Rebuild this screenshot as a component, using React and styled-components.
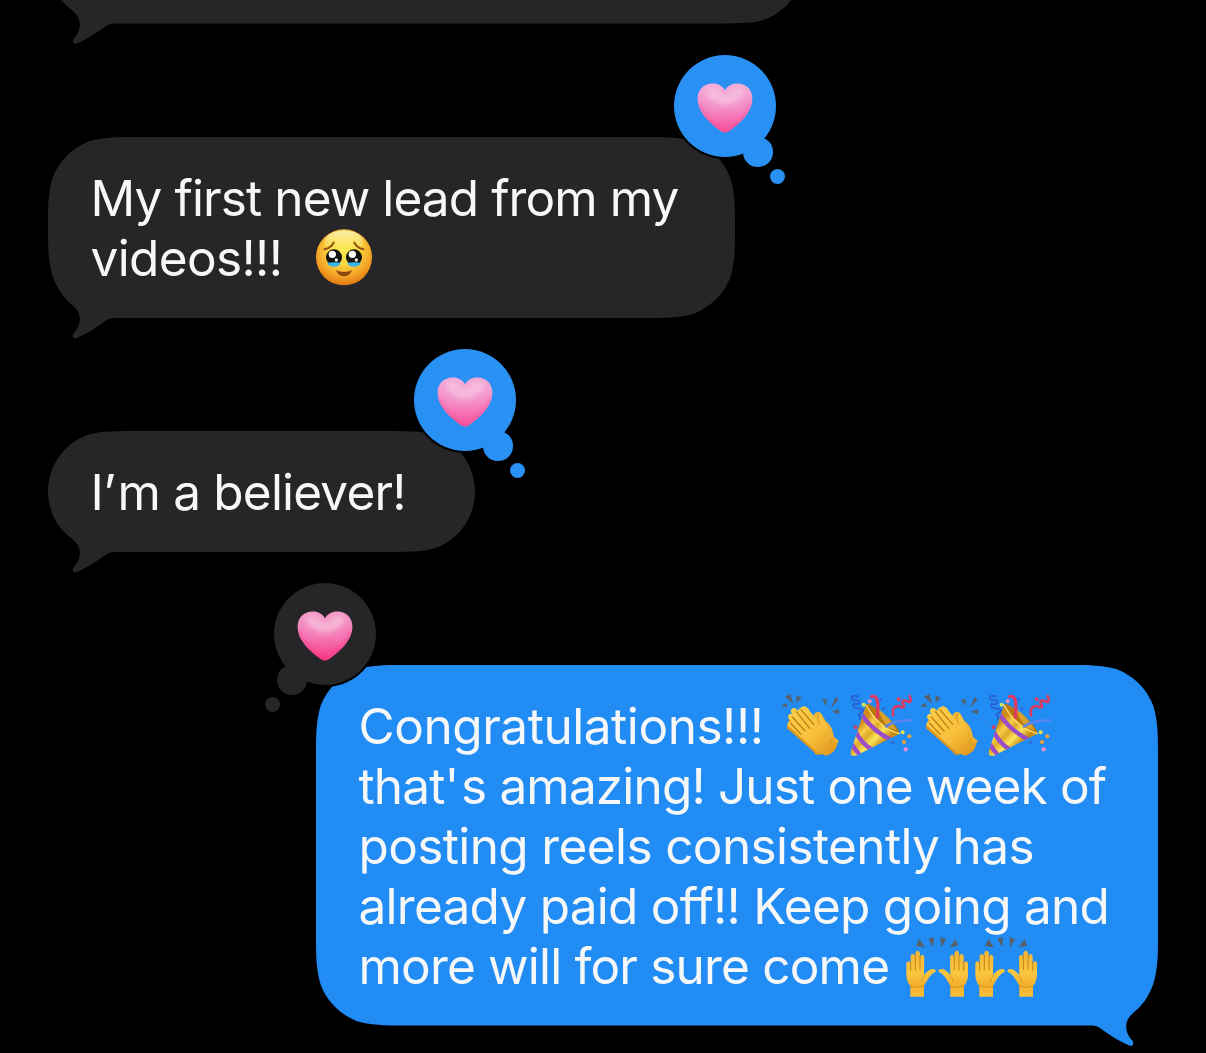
import React from 'react';
import styled, { createGlobalStyle, css } from 'styled-components';

const colors = {
    black: '#000000',
    received: '#262628',
    sent: '#208cf4',
    tapback: '#2990f4',
    text: '#f6f7f8',
    ray: '#56616b'
};

const GlobalStyle = createGlobalStyle`
    html, body {
        margin: 0;
        background: ${colors.black};
    }
`;

// corner points from the left side up to the top edge, relative to the corner
const capsuleCorner = [
    [0, 60.5], [0, 44], [6.5, 29], [17.7, 17.7], [28.4, 7], [42, 1.3], [57, 0.7], [66, 0.2], [74, 0], [85, 0]
];
const tallCorner = [
    [0, 90], [0, 70.8], [0, 56.4], [4.6, 41], [10.5, 24.5], [24.5, 10.8], [41, 4.3], [54, 0.4], [68, 0], [88, 0]
];

const curve = (points) => points.map(([x, y], i) => `${i % 3 === 0 ? 'C ' : ''}${x} ${y}`).join(' ');

// outline of a bubble with its tail at the bottom left
const bubblePath = (w, h) => {
    const isCapsule = h < 130;
    const corner = isCapsule ? capsuleCorner : tallCorner;
    const topLeft = corner.slice(1);
    const topRight = corner.map(([x, y]) => [w - x, y]).reverse();
    const bottomRight = corner.map(([x, y]) => [w - x, h - y]);
    const tail = [
        [64, h], [61, h + 0.5], [58, h + 2.5],
        [49, h + 9], [39, h + 16], [28, h + 20.3],
        [25.2, h + 20.9], [23.8, h + 18], [25.6, h + 15],
        [29, h + 11.5], [31.8, h + 7], [31.8, h + 1],
        [31.8, h - 4], [30, h - 8], [24, h - 13.3]
    ];
    const bottomLeft = isCapsule
        ? [[17, h - 19], [11, h - 24.5], [6.6, h - 33], [2.5, h - 41], [0, h - 51], [0, h - 60.5]]
        : [[16, h - 20], [10, h - 27.5], [4.9, h - 41], [0, h - 56.4], [0, h - 70.8], [0, h - 90]];

    return [
        `M 0 ${corner[0][1]}`,
        curve(topLeft),
        `L ${topRight[0].join(' ')}`,
        curve(topRight.slice(1)),
        `L ${bottomRight[0].join(' ')}`,
        curve(bottomRight.slice(1)),
        `L 68 ${h}`,
        curve(tail),
        curve(bottomLeft),
        'Z'
    ].join(' ');
};

const Screen = styled.main`
    width: 1206px;
    height: 1053px;
    box-sizing: border-box;
    padding: 0 48px;
    display: flex;
    flex-direction: column;
    gap: 113px;
    overflow: hidden;
    background: ${colors.black};
    color: ${colors.text};
    font-family: Inter, "Liberation Sans", sans-serif;
    font-size: 49.5px;
    line-height: 60px;
`;

const Bubble = styled.section`
    position: relative;
    isolation: isolate;
    flex: none;
    box-sizing: border-box;
    width: ${(props) => props.$width}px;
    height: ${(props) => props.$height}px;
    padding: 31px 0 30px 42.5px;
    align-self: ${(props) => (props.$sent ? 'flex-end' : 'flex-start')};

    &::before {
        content: '';
        position: absolute;
        z-index: -1;
        inset: 0 0 -22px;
        background: ${(props) => (props.$sent ? colors.sent : colors.received)};
        clip-path: path('${(props) => bubblePath(props.$width, props.$height)}');
        ${(props) => props.$sent && css`
            transform: scaleX(-1);
        `}
    }
`;

const CutOffBubble = styled(Bubble)`
    margin-top: -97.5px;
    margin-bottom: 0.5px;
`;

const Line = styled.div`
    display: flex;
    align-items: flex-start;
    height: 60px;
    white-space: pre;
    letter-spacing: ${(props) => props.$tracking}px;
`;

const Apostrophe = styled.span`
    letter-spacing: 1.6px;
`;

const Emojis = styled.span`
    display: flex;
    gap: 5.4px;
    margin: -3px 0 0 ${(props) => props.$gap}px;
`;

const EmojiSvg = styled.svg`
    display: block;
    width: 64px;
    height: 64px;
    overflow: visible;
`;

const Tapback = styled.div`
    position: absolute;
    top: -82px;
    ${(props) => (props.$sent ? 'left: -42px;' : 'right: -41px;')}
    width: 102px;
    height: 102px;
    display: flex;
    align-items: center;
    justify-content: center;
    border-radius: 50%;
    background: ${(props) => (props.$sent ? colors.received : colors.tapback)};
    box-shadow: 0 0 0 2px ${colors.black};

    &::before, &::after {
        content: '';
        position: absolute;
        border-radius: 50%;
        background: inherit;
    }
    &::before {
        ${(props) => (props.$sent ? 'right' : 'left')}: 69.3px;
        top: 82px;
        width: 29.6px;
        height: 29.6px;
    }
    &::after {
        ${(props) => (props.$sent ? 'right' : 'left')}: 96px;
        top: 114px;
        width: 15px;
        height: 15px;
    }
`;

const HeartSvg = styled.svg`
    display: block;
    width: 56px;
    height: 50px;
    margin-top: 3px;
`;

const Heart = ({ id, top, middle, bottom }) => (
    <HeartSvg viewBox="0 0 56 50">
        <defs>
            <linearGradient id={id} x1="0" y1="0" x2="0" y2="1">
                <stop offset="0" stopColor={top} />
                <stop offset="0.5" stopColor={middle} />
                <stop offset="1" stopColor={bottom} />
            </linearGradient>
            <filter id={`${id}-soft`} x="-30%" y="-30%" width="160%" height="160%">
                <feGaussianBlur stdDeviation="2.4" />
            </filter>
            <clipPath id={`${id}-clip`}>
                <path d="M28 7.2C25 2.4 20.4.6 15.4.6 6.8.6.6 7 .6 15.6c0 13.4 11.8 24.6 24 33q3.4 2 6.8 0c12.2-8.4 24-19.6 24-33C55.4 7 49.2.6 40.6.6 35.6.6 31 2.4 28 7.2z" />
            </clipPath>
        </defs>
        <g clipPath={`url(#${id}-clip)`}>
            <path fill={`url(#${id})`} d="M0 0h56v50H0z" />
            <path
                fill="#f7d3e6"
                fillOpacity="0.55"
                filter={`url(#${id}-soft)`}
                d="M10 6q8-3 15 4 3 3 6 0 7-7 15-4 4 6-6 12-12 8-24 0-10-6-6-12z"
            />
            <path
                fill="none"
                stroke={bottom}
                strokeOpacity="0.5"
                strokeWidth="5"
                filter={`url(#${id}-soft)`}
                d="M1 20c3 11 13 21 23.6 28.6q3.4 2 6.8 0C42 41 52 31 55 20"
            />
        </g>
    </HeartSvg>
);

const HoldingBackTears = () => (
    <EmojiSvg viewBox="36 15 192 192">
        <defs>
            <radialGradient id="face" gradientUnits="userSpaceOnUse" cx="132" cy="88" r="110">
                <stop offset="0" stopColor="#f9ea4c" />
                <stop offset="0.42" stopColor="#f8d63f" />
                <stop offset="0.72" stopColor="#f4a928" />
                <stop offset="1" stopColor="#dc7510" />
            </radialGradient>
            <linearGradient id="shine" x1="0" y1="0" x2="0" y2="1">
                <stop offset="0" stopColor="#fff9dc" stopOpacity="0.75" />
                <stop offset="1" stopColor="#fff27a" stopOpacity="0" />
            </linearGradient>
        </defs>
        <circle cx="132" cy="112" r="84" fill="url(#face)" />
        <ellipse cx="132" cy="66" rx="58" ry="34" fill="url(#shine)" />
        <path d="M74 88q19-4 27-20M190 88q-19-4-27-20" fill="none" stroke="#8a4b0c" strokeWidth="6" strokeLinecap="round" />
        {[102, 162].map((cx) => (
            <g key={cx}>
                <circle cx={cx} cy="112" r="24" fill="#16120f" />
                <path d={`M${cx - 20} 128q20-3 40 0q-4 12-20 12t-20-12z`} fill="#3ab8f0" />
                <circle cx={cx - 5} cy="103" r="11" fill="#fff" />
                <circle cx={cx + 7} cy="120" r="5" fill="#e8eef0" />
            </g>
        ))}
        <path d="M108 151q24 10 48 0q-7 18-24 18t-24-18z" fill="#8d480c" />
    </EmojiSvg>
);

const Clap = ({ id }) => (
    <EmojiSvg viewBox="30 24 192 192">
        <defs>
            <linearGradient id={id} x1="0" y1="0" x2="0.8" y2="1">
                <stop offset="0" stopColor="#fbd04a" />
                <stop offset="0.6" stopColor="#f8c03c" />
                <stop offset="1" stopColor="#e39a1e" />
            </linearGradient>
        </defs>
        <path fill={colors.ray} d="M35 64l18-11 3 14zM47 35l17-7 9 28zM83 31l15 8-16 15zM159 44l14-2v22zM200 36l9 8-23 25zM188 80l22-8v16z" />
        <path
            fill="#dd9622"
            d="M56 98q2-8 10-6L54 122q-2 8 6 13l74 65q6 12 18 9l30-8-30-88z"
        />
        <path
            fill="#efb234"
            d="M134 92q2-11 13-11 10 0 14 12l8 14q18 14 22 32l4 17 15 12-30 34-60-60z"
        />
        <path
            fill={`url(#${id})`}
            d="M98 67q7-7 15 0 6 4 9 11l20 24q3 2 3-5 1-10 6-10 10 6 13 20l12 18q10 15 10 33l20 16q-4 28-34 38-24-7-42-23L62 126q-9-8-5-13 4-6 12-1L58 99q-3-7 3-11 7-4 12 2l-7-8q-2-8 4-12 6-3 12 2l6 6q0-9 10-11z"
        />
        <path d="M96 74l38 44M82 80l40 50M70 96l38 42M64 114l32 34" fill="none" stroke="#b97913" strokeWidth="3.5" strokeLinecap="round" />
        <path d="M148 88q-4 16 3 29M196 157q-9 4-13 16" fill="none" stroke="#d18f1d" strokeWidth="3" strokeLinecap="round" />
    </EmojiSvg>
);

const Party = ({ id }) => (
    <EmojiSvg viewBox="237 24 192 192">
        <defs>
            <linearGradient id={`${id}-cone`} gradientUnits="userSpaceOnUse" x1="262" y1="125" x2="325" y2="188">
                <stop offset="0" stopColor="#d08a18" />
                <stop offset="0.25" stopColor="#f7d04a" />
                <stop offset="0.45" stopColor="#e0a829" />
                <stop offset="0.7" stopColor="#fbe75a" />
                <stop offset="1" stopColor="#c98a18" />
            </linearGradient>
            <clipPath id={`${id}-clip`}>
                <path d="M288 60L242 200q-3 15 16 12l130-66q-60-20-100-86z" />
            </clipPath>
        </defs>
        <path d="M264 34q-18-4-19 4 0 7 14 8 12 1 8 8-3 5-16 2-6 6 4 12l18 4q10 2 3 10l-10 6q6 4 4 14" fill="none" stroke="#2a62d6" strokeWidth="6" strokeLinecap="round" />
        <path d="M288 60q5-6 14 0 60 34 84 76 5 11-4 14-60-20-94-90z" fill="#b7790f" />
        <path d="M322 70q40 30 58 66l-24-8q-20-20-34-58z" fill="#dba22b" />
        <g clipPath={`url(#${id}-clip)`}>
            <path fill={`url(#${id}-cone)`} d="M240 55h150v160H240z" />
            <path d="M274 88q34 50 88 76M257 140q18 36 52 56M246 178q8 16 24 32" fill="none" stroke="#9b4cc8" strokeWidth="13" />
        </g>
        <path d="M288 60q38 68 100 86" fill="none" stroke="#fbe06a" strokeWidth="4" strokeLinecap="round" />
        <path d="M305 35q14-4 17 12 3 17 0 50" fill="none" stroke="#e23a5e" strokeWidth="10" strokeLinecap="round" />
        <path d="M348 124q24-18 76-18" fill="none" stroke="#5a84ee" strokeWidth="8" strokeLinecap="round" />
        <path d="M419 33q7 18-2 18-10-5-17-4-6 4 1 12 4 9-5 8-10-6-18-2-12 2-9 26" fill="none" stroke="#dd3a62" strokeWidth="8" strokeLinecap="round" strokeLinejoin="round" />
        <g>
            <circle cx="281" cy="59" r="6" fill="#d9e35a" />
            <circle cx="299" cy="49" r="6" fill="#ee8fc4" />
            <circle cx="386" cy="43" r="6" fill="#e2405f" />
            <circle cx="257" cy="127" r="6" fill="#cf3f68" />
            <circle cx="332" cy="43" r="5" fill="#2f69d8" />
            <circle cx="341" cy="71" r="5" fill="#2f69d8" />
            <circle cx="368" cy="172" r="5" fill="#2f69d8" />
            <circle cx="398" cy="142" r="6" fill="#e8e04c" />
            <circle cx="418" cy="154" r="6" fill="#eda23c" />
            <circle cx="402" cy="171" r="6" fill="#f0a02e" />
            <circle cx="407" cy="193" r="6.5" fill="#ee8fd4" />
        </g>
    </EmojiSvg>
);

const Hand = ({ fill }) => (
    <>
        <path
            fill={fill}
            d="M48 116q0-7 6-7t7 8V95q0-8 6.5-8t7.5 8V85q0-8 6.5-8t7.5 8v12q1-8 6.5-8t6.5 8l-1 52q10-11 20-16 14-3 16 4-1 5-9 8-11 9-17 20-8 13-10 19v31H60v-32q-10-12-12-31z"
        />
        <path d="M61 111v26M75 90v44M89 92v42" fill="none" stroke="#b77b16" strokeWidth="2.5" strokeLinecap="round" />
        <path d="M102 152q-8 8-9 18M62 184q20 7 39 0" fill="none" stroke="#d9951f" strokeWidth="3" strokeLinecap="round" />
    </>
);

const RaisedHands = ({ id }) => (
    <EmojiSvg viewBox="44 24 192 192">
        <defs>
            <linearGradient id={id} x1="0" y1="0" x2="0" y2="1">
                <stop offset="0" stopColor="#f3b636" />
                <stop offset="0.5" stopColor="#fbc63f" />
                <stop offset="0.75" stopColor="#f2ae2c" />
                <stop offset="1" stopColor="#fbc13c" />
            </linearGradient>
        </defs>
        <path fill={colors.ray} d="M77 62l11-21 16 27zM114 42l17-6-2 31zM150 36l18 7-16 24zM178 68l17-26 9 19z" />
        <Hand fill={`url(#${id})`} />
        <g transform="matrix(-1 0 0 1 281 0)">
            <Hand fill={`url(#${id})`} />
        </g>
    </EmojiSvg>
);

const App = () => (
    <>
        <GlobalStyle />
        <Screen>
            <CutOffBubble $width={756} $height={121} />
            <Bubble $width={687} $height={181}>
                <Line $tracking={-0.9}>My first new lead from my</Line>
                <Line $tracking={-0.64}>
                    videos!!!
                    <Emojis $gap={30}>
                        <HoldingBackTears />
                    </Emojis>
                </Line>
                <Tapback>
                    <Heart id="heart-1" top="#f3acd8" middle="#f48fc9" bottom="#f74d98" />
                </Tapback>
            </Bubble>
            <Bubble $width={427} $height={121}>
                <Line $tracking={-0.8}>I<Apostrophe>’</Apostrophe>m a believer!</Line>
                <Tapback>
                    <Heart id="heart-2" top="#f3acd8" middle="#f48fc9" bottom="#f74d98" />
                </Tapback>
            </Bubble>
            <Bubble $sent $width={842} $height={360.5}>
                <Line $tracking={-0.45}>
                    Congratulations!!!
                    <Emojis $gap={15.8}>
                        <Clap id="clap-1" />
                        <Party id="party-1" />
                        <Clap id="clap-2" />
                        <Party id="party-2" />
                    </Emojis>
                </Line>
                <Line $tracking={-0.84}>that<Apostrophe>'</Apostrophe>s amazing! Just one week of</Line>
                <Line $tracking={-0.62}>posting reels consistently has</Line>
                <Line $tracking={-0.73}>already paid off!! Keep going and</Line>
                <Line $tracking={-0.81}>
                    more will for sure come
                    <Emojis $gap={15.4}>
                        <RaisedHands id="hands-1" />
                        <RaisedHands id="hands-2" />
                    </Emojis>
                </Line>
                <Tapback $sent>
                    <Heart id="heart-3" top="#f39cc8" middle="#f47cb8" bottom="#f83583" />
                </Tapback>
            </Bubble>
        </Screen>
    </>
);

export default App;
